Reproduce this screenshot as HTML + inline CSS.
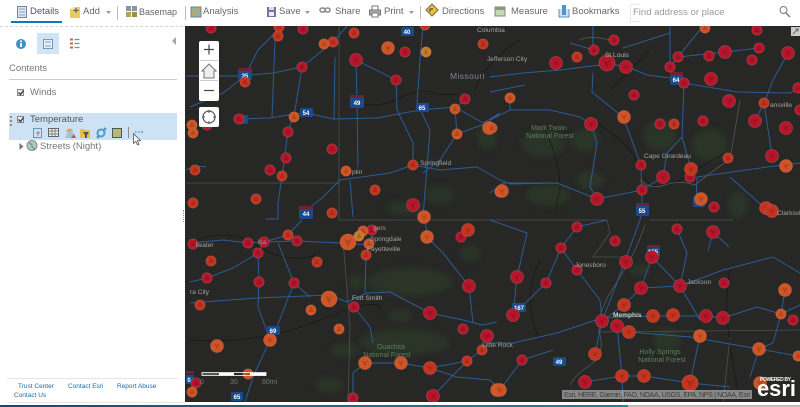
<!DOCTYPE html>
<html><head><meta charset="utf-8">
<style>
html,body{margin:0;padding:0;width:800px;height:407px;overflow:hidden;background:#fff;font-family:"Liberation Sans",sans-serif}
.t{position:absolute;font-size:9.500px;line-height:12px;color:#666;white-space:nowrap}
.l{position:absolute;font-size:6.500px;line-height:9px;color:#1d6aa5;white-space:nowrap}
#map{position:absolute;left:185px;top:26px;width:615px;height:376px;background:#272725;overflow:hidden}
svg{position:absolute;left:0;top:0}
.sep{position:absolute;width:1px;background:#bbb}
.btn{position:absolute;left:199px;width:20px;background:#fff}
</style></head><body>

<!-- toolbar -->
<div style="position:absolute;left:0;top:26px;width:800px;border-top:1px dashed #d4d4d4"></div>
<div style="position:absolute;left:11px;top:21px;width:51px;height:2px;background:#0a79bf"></div>
<svg width="640" height="26" style="left:0;top:0">
<rect x="17.500" y="6.500" width="9" height="11" fill="#dce6ee" stroke="#6c87a0"/><path d="M19 9h6M19 12h6M19 15h6" stroke="#87a6c0"/>
<path d="M70 9h3l1 -2h6v11H70z" fill="#e8cc60"/><path d="M76 8v5M73.500 10.500h5" stroke="#555"/>
<path d="M106 11h5l-2.500 3z" fill="#999"/>
<g fill="#8a97a3"><rect x="126" y="6" width="5" height="5"/><rect x="132" y="6" width="5" height="5"/></g><rect x="126" y="12" width="5" height="5" fill="#b5a258"/><rect x="132" y="12" width="5" height="5" fill="#a08a48"/>
<rect x="191" y="7" width="10" height="10" fill="#8fb29a" stroke="#77818a"/><path d="M192 15l7-7" stroke="#c9a34b" stroke-width="2"/>
<rect x="267" y="7" width="9" height="10" fill="#7a6fa8"/><rect x="269" y="7" width="5" height="3" fill="#ddd"/><rect x="269" y="12" width="5" height="4" fill="#eee"/>
<path d="M305 11h5l-2.500 3z" fill="#999"/>
<rect x="320" y="8" width="5" height="4" rx="2" fill="none" stroke="#888" stroke-width="1.500"/><rect x="325" y="8" width="5" height="4" rx="2" fill="none" stroke="#888" stroke-width="1.500"/>
<rect x="372" y="6" width="6" height="4" fill="#fff" stroke="#777"/><rect x="369.500" y="10" width="11" height="5" fill="#aaa" stroke="#777"/><rect x="372" y="13" width="6" height="4" fill="#fff" stroke="#777"/>
<path d="M409 11h5l-2.500 3z" fill="#999"/>
<path d="M432 4l6 6-6 6-6-6z" fill="#e6c24a" stroke="#7c6a2a"/><path d="M430 12v-3h3" stroke="#333" fill="none"/>
<rect x="495" y="7" width="10" height="9" fill="#c6d7b8" stroke="#7b8a70"/><rect x="495" y="7" width="10" height="3" fill="#889a78"/>
<path d="M559 9v8h10V9" fill="#cfe0ee" stroke="#5c93bd"/><rect x="562" y="5" width="4" height="10" fill="#4d94c9"/>
<rect x="630.500" y="4.500" width="166" height="17" fill="#fff" stroke="#ddd" stroke-dasharray="2 1"/>
</svg>
<svg width="20" height="26" style="left:778px;top:0"><circle cx="5.500" cy="10" r="3.500" fill="none" stroke="#777"/><path d="M8 13l4 4" stroke="#777" stroke-width="1.300"/></svg>
<div class="t" style="left:30px;top:6px;color:#58506a">Details</div>
<div class="t" style="left:83px;top:6px">Add</div>
<div class="sep" style="left:117px;top:6px;height:14px"></div>
<div class="t" style="left:139px;top:6px;font-size:9px">Basemap</div>
<div class="sep" style="left:185px;top:6px;height:14px"></div>
<div class="t" style="left:203px;top:6px">Analysis</div>
<div class="t" style="left:279px;top:6px">Save</div>
<div class="t" style="left:335px;top:6px">Share</div>
<div class="t" style="left:384px;top:6px">Print</div>
<div class="sep" style="left:420px;top:6px;height:13px"></div>
<div class="t" style="left:442px;top:6px">Directions</div>
<div class="t" style="left:511px;top:6px">Measure</div>
<div class="t" style="left:572px;top:6px">Bookmarks</div>
<div class="t" style="left:633px;top:7px;color:#999">Find address or place</div>

<!-- left panel -->
<div style="position:absolute;left:37px;top:33px;width:22px;height:21px;background:#cfe4f5"></div>
<div style="position:absolute;left:9px;top:113px;width:168px;height:27px;background:#cde3f5"></div>
<svg width="185" height="160" style="left:0;top:0;z-index:2;pointer-events:none">
<circle cx="21" cy="44" r="5" fill="#3e8fc9"/><rect x="20" y="43" width="2" height="4" fill="#fff"/><rect x="20" y="40.500" width="2" height="1.500" fill="#fff"/>
<rect x="43.500" y="39.500" width="9" height="9" fill="#e8f0f5" stroke="#7d98ae"/><path d="M45 42h6M45 46h6" stroke="#7ba4c4"/>
<path d="M70 39.500h3M70 43.500h3M70 47.500h3" stroke="#c06a50" stroke-width="2"/><path d="M74.500 39.500h5M74.500 43.500h5M74.500 47.500h5" stroke="#5a9bc8" stroke-width="1.200"/>
<path d="M176 37v8l-4-4z" fill="#a5a5a5"/>
<g fill="#eee" stroke="#888"><rect x="17.500" y="89.500" width="6" height="6"/><rect x="17.500" y="116.500" width="6" height="6"/></g>
<path d="M18.500 92.500l2 2 3-4M18.500 119.500l2 2 3-4" fill="none" stroke="#333" stroke-width="1.300"/>
<g fill="#8c8c8c"><rect x="10" y="116" width="2" height="2"/><rect x="10" y="120" width="2" height="2"/><rect x="10" y="124" width="2" height="2"/></g>
<rect x="33.500" y="128.500" width="8" height="9" fill="none" stroke="#5a9bc8"/><path d="M36 133h4M38 131v5" stroke="#c4774f"/>
<rect x="48.500" y="128.500" width="10" height="8" fill="#eee" stroke="#666"/><path d="M49 131h9M49 134h9M52 129v7M55 129v7" stroke="#666" stroke-width=".7"/>
<path d="M65 138l4-9h3l3 9z" fill="#9fc5d8"/><path d="M66 132a4 4 0 0 1 7-2z" fill="#e3a24e"/><path d="M71 138l3-4 2 4z" fill="#c8563c"/>
<path d="M80 129h4l1 1h5v8h-10z" fill="#e7bf4e"/><path d="M83 132h6l-2 3v3h-2v-3z" fill="#555"/>
<circle cx="101" cy="133" r="3.500" fill="none" stroke="#4fa0c4" stroke-width="2"/><circle cx="105" cy="129" r="1.500" fill="#4fa0c4"/><circle cx="98" cy="137" r="1.500" fill="#4fa0c4"/>
<rect x="112.500" y="128.500" width="9" height="9" fill="#a0bd8c" stroke="#555"/><path d="M114 136l6-6" stroke="#d9ae43" stroke-width="2"/>
<path d="M128.500 127v11" stroke="#8a8a8a"/>
<path d="M135 132h1.500M138 132h1.500M141 132h2" stroke="#5a9ed1" stroke-width="1.500"/>
<path d="M133.500 133.500v10l2.300-2 1.700 3.500 1.500-.7-1.600-3.500 3-.3z" fill="#f5f5f5" stroke="#555" stroke-width=".8"/>
<path d="M19.500 143v7l4-3.500z" fill="#777"/>
<circle cx="32" cy="145.500" r="5" fill="#a5cfc4" stroke="#888"/><path d="M29 143q3 1 3 3t3 3" stroke="#7aa074" fill="none" stroke-width="1.500"/>
</svg>
<div style="position:absolute;left:9px;top:79px;width:168px;height:1px;background:#ccc"></div>
<div class="t" style="left:9px;top:63px;color:#777">Contents</div>
<div class="t" style="left:30px;top:87px;color:#777">Winds</div>
<div class="t" style="left:30px;top:114px;color:#555">Temperature</div>
<div class="t" style="left:40px;top:141px;color:#777">Streets (Night)</div>
<div style="position:absolute;left:7px;top:378px;width:171px;height:1px;background:#e5e5e5"></div>
<div class="l" style="left:18px;top:382px">Trust Center</div>
<div class="l" style="left:68px;top:382px">Contact Esri</div>
<div class="l" style="left:117px;top:382px">Report Abuse</div>
<div class="l" style="left:14px;top:391px">Contact Us</div>
<div style="position:absolute;left:7px;top:402px;width:178px;height:1px;background:#e5e5e5"></div>
<div style="position:absolute;left:0;top:405px;width:628px;height:2px;background:linear-gradient(90deg,#17496a,#156f7d 50%,#1a8a8a)"></div>
<div style="position:absolute;left:628px;top:405px;width:172px;height:2px;background:#bdbdb5"></div>
<div style="position:absolute;left:183px;top:210px;width:1px;height:12px;border-left:1px dotted #999"></div>

<!-- map -->
<div id="map">
<svg width="615" height="376" viewBox="185 26 615 376">
<defs>
<filter id="b"><feGaussianBlur stdDeviation="3"/></filter>
<g id="c5"><circle r="5.200" stroke="#e08a78" stroke-opacity=".35" stroke-width=".7"/><path d="M-2.500 2L0-3.500 2.500 2z" fill="#000" opacity=".15"/></g>
<g id="c6"><circle r="6.500" stroke="#e08a78" stroke-opacity=".35" stroke-width=".7"/><path d="M-3-2.500L0 3.500 3-2.500 0-1z" fill="#000" opacity=".15"/></g>
<g id="c8"><circle r="8" stroke="#eb9a80" stroke-opacity=".35" stroke-width=".7"/><path d="M-4-3.500L0 5 4-3.500 0-1.500z" fill="#000" opacity=".15"/></g>
</defs>
<!-- forests -->
<g fill="#2f4229" filter="url(#b)" opacity=".5">
<ellipse cx="543" cy="143" rx="22" ry="14"/><ellipse cx="548" cy="195" rx="22" ry="11"/><ellipse cx="585" cy="140" rx="14" ry="12"/><ellipse cx="660" cy="135" rx="16" ry="16"/><ellipse cx="710" cy="145" rx="18" ry="16"/><ellipse cx="590" cy="180" rx="14" ry="9"/>
<ellipse cx="487" cy="137" rx="10" ry="12"/><ellipse cx="440" cy="195" rx="14" ry="9"/><ellipse cx="405" cy="208" rx="18" ry="7"/>
<ellipse cx="410" cy="282" rx="42" ry="14"/><ellipse cx="470" cy="253" rx="10" ry="8"/><ellipse cx="356" cy="282" rx="8" ry="8"/><ellipse cx="405" cy="342" rx="45" ry="13"/><ellipse cx="345" cy="350" rx="14" ry="7"/><ellipse cx="330" cy="385" rx="14" ry="8"/><ellipse cx="400" cy="316" rx="12" ry="6"/>
<ellipse cx="667" cy="340" rx="14" ry="12"/><ellipse cx="640" cy="270" rx="10" ry="6"/><ellipse cx="738" cy="205" rx="10" ry="14"/>
</g>
<!-- state lines -->
<g fill="none" stroke="#4f4f53" stroke-width=".8">
<path d="M339 26V220H490L607 220l3 13-17 24h30"/><path d="M186 183H339"/><path d="M343 240l7 87-2 75"/><path d="M650 220H733"/><path d="M597 332L800 330"/><path d="M730 337l-7 65"/>
</g>
<!-- rivers -->
<g fill="none" stroke="#101216" stroke-width=".8" opacity=".7">
<path d="M360 104q20 4 40-6t30-6 30 2"/><path d="M475 90q5-15 20-30t25-20"/><path d="M590 120q40 20 50 50t50 4 40-20"/><path d="M186 245q40-20 70 0t60 10"/><path d="M190 340q70 5 130-20t60-10"/><path d="M545 130q15 30 15 60l-5 20"/><path d="M610 90q20-20 40-40"/><path d="M540 340q-20-40 0-80"/><path d="M730 270q-10 40 10 130"/>
</g>
<g fill="none" stroke="#5c5c5e" stroke-width=".7">
<path d="M640 180q10 10 25 5t30 0q25-20 35-25 5-30 10-60"/><path d="M645 225q-10 30-30 60t-15 50-10 30-20 20"/><path d="M610 40q-20-5-30 0"/>
</g>
<!-- roads -->
<g fill="none" stroke="#2b5c96" stroke-width="1" stroke-linejoin="round">
<path d="M186 76H238L273 73 302 67 323 50 333 42 347 26"/>
<path d="M190 107L223 93 245 76 258 50 275 33"/>
<path d="M239 119L270 118 294 114 307 113 333 119 377 118 420 110 455 107 483 123 500 113"/>
<path d="M356 60L357 102 358 167"/>
<path d="M356 60L396 80 397 110 413 143V165"/>
<path d="M423 26L420 60 417 103 430 130 423 217"/>
<path d="M275 40L272 117"/>
<path d="M302 67L295 110 288 132 282 176 278 203"/>
<path d="M335 57L334 119"/>
<path d="M303 213L323 197 340 180 390 173 413 165 440 170 477 167 500 180 510 184 557 183 597 199 642 190 663 177 667 153 682 137 684 83"/>
<path d="M350 180L353 217"/>
<path d="M457 134L440 160 423 173"/>
<path d="M465 99L455 109 457 134"/>
<path d="M500 113L487 123 457 134"/>
<path d="M510 98V110L490 120"/>
<path d="M510 110L550 110 580 117 591 124 597 143 590 187 597 199"/>
<path d="M490 77L523 73 560 70 600 65"/>
<path d="M607 63L630 68 647 75 670 78 684 83 737 92 790 93 800 88"/>
<path d="M670 26V70M703 26L678 57 670 67"/>
<path d="M593 73L592 92 623 117 641 165 642 207"/>
<path d="M682 137L691 169"/>
<path d="M678 57L725 52 759 48"/>
<path d="M594 50L570 43M593 26V50M623 48L670 33"/>
<path d="M697 177L767 167 800 163M697 177L696 203M730 177L767 210"/>
<path d="M772 156L764 103M755 121L764 103 773 80 788 53"/>
<path d="M190 282L207 278 233 268 258 253 264 242 297 241 340 243 370 245"/>
<path d="M190 243L223 240 248 243 264 242"/>
<path d="M302 220L288 235 264 242"/>
<path d="M190 303L257 298 329 295 347 302 367 293 390 292 430 313 463 320 482 325 497 322"/>
<path d="M258 253L259 282 258 307 270 340 253 377 245 402"/>
<path d="M294 283L273 337M278 243L294 283 310 297"/>
<path d="M366 255L365 293"/>
<path d="M354 307L370 327 373 343"/>
<path d="M365 363L353 373V402"/>
<path d="M365 363L401 363 430 368 467 361 482 350 487 336"/>
<path d="M430 368L457 377 490 380 500 390"/>
<path d="M433 396L467 361"/>
<path d="M425 218L427 237 443 253 469 286 473 323"/>
<path d="M490 343H513L557 333 602 318 653 316 706 316 723 318 757 307 781 314 800 305"/>
<path d="M513 315L517 277 527 233 510 227 490 220"/>
<path d="M513 315L546 283 561 248 577 227 607 220"/>
<path d="M561 248L577 270 600 300 602 321"/>
<path d="M602 321L617 283 640 220 643 207"/>
<path d="M617 326L622 376 623 402"/>
<path d="M629 332L690 337 759 349 798 356"/>
<path d="M602 321L595 354"/>
<path d="M641 288L680 286 723 270 773 257 800 273"/>
<path d="M652 257L641 288 624 305 602 321"/>
<path d="M652 257L680 286 700 320"/>
<path d="M677 229L687 253 680 286"/>
<path d="M713 232L708 251M713 232L729 247"/>
<path d="M585 382L622 376 644 376 690 383 730 387"/>
<path d="M690 383L700 336"/>
<path d="M500 390L522 360 553 350"/>
<path d="M759 349L750 377"/>
<path d="M785 290L781 314 773 343 759 349"/>
<path d="M490 193L503 183 557 183"/>
<path d="M490 92L525 85"/>
<path d="M186 170q10-5 20-3"/><path d="M278 203v16h-12"/>
</g>
<!-- shields -->
<g font-family="Liberation Sans,sans-serif" font-size="6" font-weight="bold" fill="#fff" text-anchor="middle">
<g fill="#1a4a8c"><rect x="238" y="69" width="14" height="11" rx="2"/><rect x="350" y="96" width="14" height="12" rx="2"/><rect x="299" y="207" width="14" height="12" rx="2"/><rect x="670" y="73" width="13" height="12" rx="2"/><rect x="636" y="204" width="13" height="12" rx="2"/><rect x="647" y="246" width="13" height="11" rx="2"/><rect x="693" y="196" width="12" height="11" rx="2"/>
<rect x="401" y="27" width="13" height="9" rx="1"/><rect x="300" y="108" width="13" height="9" rx="1"/><rect x="416" y="103" width="13" height="9" rx="1"/><rect x="512" y="303" width="14" height="9" rx="1"/><rect x="553" y="357" width="13" height="9" rx="1"/><rect x="267" y="326" width="13" height="9" rx="1"/><rect x="231" y="392" width="12" height="9" rx="1"/><rect x="240" y="115" width="8" height="9" rx="1"/><rect x="186" y="375" width="8" height="9" rx="1"/></g>
<g fill="#6b2330"><rect x="238" y="68" width="14" height="3"/><rect x="350" y="95" width="14" height="3"/><rect x="299" y="206" width="14" height="3"/><rect x="670" y="72" width="13" height="3"/><rect x="636" y="203" width="13" height="3"/><rect x="647" y="245" width="13" height="3"/><rect x="186" y="371" width="8" height="3"/></g>
<text x="245" y="78">35</text><text x="357" y="105">49</text><text x="306" y="216">44</text><text x="676" y="82">64</text><text x="642" y="213">55</text><text x="653" y="254">155</text><text x="699" y="204">57</text><text x="407" y="34">40</text><text x="306" y="115">54</text><text x="422" y="110">65</text><text x="519" y="310">167</text><text x="559" y="364">49</text><text x="273" y="333">69</text><text x="237" y="399">65</text><text x="189" y="382">0</text>
</g>
<!-- dots -->
<g fill="#b5162c">
<use href="#c5" x="211" y="28"/><use href="#c5" x="303" y="29"/><use href="#c5" x="405" y="52"/><use href="#c5" x="302" y="67"/><use href="#c6" x="356" y="60"/><use href="#c5" x="396" y="80"/><use href="#c5" x="465" y="99"/><use href="#c5" x="239" y="119"/><use href="#c5" x="207" y="125"/><use href="#c5" x="288" y="132"/><use href="#c5" x="332" y="149"/><use href="#c5" x="286" y="158"/><use href="#c5" x="270" y="170"/><use href="#c6" x="413" y="205"/>
<use href="#c5" x="614" y="40"/><use href="#c5" x="594" y="50"/><use href="#c6" x="556" y="63"/><use href="#c8" x="607" y="63"/><use href="#c6" x="626" y="67"/><use href="#c5" x="678" y="57"/><use href="#c5" x="670" y="67"/><use href="#c5" x="684" y="83"/><use href="#c5" x="709" y="56"/><use href="#c6" x="725" y="52"/><use href="#c6" x="711" y="79"/><use href="#c5" x="757" y="30"/><use href="#c5" x="759" y="48"/><use href="#c5" x="752" y="60"/><use href="#c6" x="788" y="53"/><use href="#c5" x="798" y="88"/><use href="#c6" x="729" y="101"/><use href="#c6" x="755" y="121"/><use href="#c6" x="786" y="128"/><use href="#c5" x="800" y="110"/><use href="#c5" x="634" y="95"/><use href="#c6" x="591" y="124"/><use href="#c5" x="660" y="124"/><use href="#c5" x="703" y="121"/><use href="#c6" x="772" y="156"/><use href="#c5" x="641" y="165"/><use href="#c5" x="690" y="177"/><use href="#c6" x="663" y="177"/><use href="#c5" x="642" y="190"/><use href="#c6" x="597" y="199"/><use href="#c5" x="714" y="207"/>
<use href="#c5" x="193" y="244"/><use href="#c5" x="248" y="243"/><use href="#c5" x="264" y="242"/><use href="#c5" x="297" y="241"/><use href="#c5" x="258" y="253"/><use href="#c5" x="207" y="278"/><use href="#c5" x="259" y="282"/><use href="#c5" x="294" y="283"/><use href="#c5" x="372" y="230"/><use href="#c5" x="461" y="237"/><use href="#c6" x="469" y="286"/><use href="#c5" x="354" y="307"/><use href="#c6" x="430" y="313"/><use href="#c5" x="463" y="329"/><use href="#c6" x="487" y="336"/><use href="#c5" x="196" y="383"/><use href="#c6" x="433" y="396"/><use href="#c5" x="353" y="398"/>
<use href="#c5" x="577" y="227"/><use href="#c5" x="615" y="241"/><use href="#c5" x="561" y="248"/><use href="#c5" x="677" y="229"/><use href="#c6" x="713" y="232"/><use href="#c6" x="652" y="257"/><use href="#c6" x="626" y="262"/><use href="#c5" x="577" y="270"/><use href="#c6" x="517" y="277"/><use href="#c5" x="546" y="283"/><use href="#c6" x="641" y="288"/><use href="#c6" x="680" y="286"/><use href="#c5" x="724" y="283"/><use href="#c6" x="513" y="315"/><use href="#c6" x="602" y="321"/><use href="#c6" x="617" y="326"/><use href="#c5" x="793" y="320"/><use href="#c5" x="522" y="360"/><use href="#c6" x="585" y="382"/><use href="#c6" x="706" y="316"/><use href="#c6" x="723" y="318"/>
</g>
<g fill="#c43420">
<use href="#c5" x="278" y="36"/><use href="#c5" x="279" y="27"/><use href="#c5" x="425" y="25"/><use href="#c5" x="333" y="42"/><use href="#c5" x="354" y="33"/><use href="#c5" x="483" y="44"/><use href="#c5" x="245" y="82"/><use href="#c5" x="282" y="176"/><use href="#c5" x="195" y="170"/><use href="#c5" x="413" y="165"/><use href="#c5" x="375" y="190"/><use href="#c5" x="256" y="199"/><use href="#c5" x="193" y="203"/><use href="#c5" x="332" y="213"/>
<use href="#c5" x="577" y="57"/><use href="#c5" x="764" y="103"/><use href="#c5" x="674" y="124"/><use href="#c5" x="728" y="158"/><use href="#c6" x="691" y="169"/>
<use href="#c5" x="288" y="235"/><use href="#c5" x="211" y="261"/><use href="#c5" x="317" y="262"/><use href="#c5" x="200" y="305"/><use href="#c5" x="366" y="255"/><use href="#c5" x="482" y="350"/><use href="#c5" x="467" y="361"/><use href="#c6" x="430" y="368"/>
<use href="#c6" x="624" y="305"/><use href="#c6" x="653" y="316"/><use href="#c6" x="673" y="315"/><use href="#c6" x="629" y="332"/><use href="#c6" x="595" y="354"/><use href="#c6" x="622" y="376"/><use href="#c6" x="644" y="376"/><use href="#c8" x="690" y="383"/><use href="#c6" x="766" y="208"/><use href="#c6" x="772" y="211"/><use href="#c6" x="468" y="230"/>
</g>
<g fill="#cf5426">
<use href="#c5" x="324" y="44"/><use href="#c6" x="388" y="48"/><use href="#c5" x="455" y="109"/><use href="#c5" x="294" y="117"/><use href="#c5" x="192" y="125"/><use href="#c5" x="193" y="133"/><use href="#c5" x="457" y="134"/><use href="#c6" x="489" y="128"/><use href="#c5" x="346" y="171"/><use href="#c6" x="424" y="217"/><use href="#c5" x="500" y="192"/><use href="#c5" x="510" y="98"/><use href="#c6" x="624" y="117"/><use href="#c5" x="492" y="128"/><use href="#c6" x="786" y="166"/><use href="#c6" x="502" y="191"/><use href="#c6" x="701" y="199"/><use href="#c5" x="705" y="28"/>
<use href="#c8" x="329" y="299"/><use href="#c8" x="348" y="242"/><use href="#c5" x="363" y="231"/><use href="#c5" x="369" y="244"/><use href="#c6" x="427" y="237"/><use href="#c5" x="311" y="310"/><use href="#c5" x="339" y="329"/><use href="#c6" x="217" y="346"/><use href="#c6" x="270" y="340"/><use href="#c6" x="365" y="363"/><use href="#c6" x="401" y="363"/><use href="#c5" x="248" y="374"/><use href="#c5" x="192" y="392"/><use href="#c6" x="497" y="390"/>
<use href="#c6" x="785" y="290"/><use href="#c5" x="781" y="314"/><use href="#c6" x="700" y="336"/><use href="#c6" x="759" y="349"/><use href="#c5" x="798" y="356"/><use href="#c6" x="760" y="383"/><use href="#c6" x="500" y="390"/>
</g>
<g fill="#c67a2a"><use href="#c5" x="426" y="52"/><use href="#c5" x="359" y="236"/></g>
<!-- labels -->
<g font-family="Liberation Sans,sans-serif" font-size="6.600" fill="#a3a3a0">
<text x="477" y="32">Columbia</text><text x="487" y="61">Jefferson City</text><text x="605" y="57" fill="#b5b5b2">St Louis</text><text x="420" y="165">Springfield</text><text x="352" y="174">plin</text><text x="644" y="158">Cape Girardeau</text><text x="770" y="107">ansville</text><text x="777" y="215">Clarksville</text><text x="373" y="230">gers</text><text x="370" y="241">Springdale</text><text x="367" y="251">Fayetteville</text><text x="352" y="300" fill="#b5b5b2">Fort Smith</text><text x="258" y="244">lsa</text><text x="196" y="247">lwater</text><text x="190" y="294">ra City</text><text x="575" y="267">Jonesboro</text><text x="687" y="284">Jackson</text><text x="613" y="317" fill="#d0d0cc" font-weight="bold">Memphis</text><text x="482" y="347">Little Rock</text>
<text x="450" y="79" font-size="8.500" fill="#8e7f9c" letter-spacing=".4">Missouri</text>
</g>
<g font-family="Liberation Sans,sans-serif" font-size="7" fill="#58805a" text-anchor="middle">
<text x="549" y="130">Mark Twain</text><text x="550" y="138">National Forest</text>
<text x="391" y="349">Ouachita</text><text x="387" y="357">National Forest</text>
<text x="660" y="354">Holly Springs</text><text x="662" y="362">National Forest</text>
</g>
<!-- scale bar -->
<g><rect x="202" y="373" width="17" height="2" fill="#555"/><rect x="202" y="372.500" width="64" height="3" fill="none" stroke="#fff" stroke-width=".8"/><rect x="219" y="373" width="15" height="2.500" fill="#fff"/><rect x="250" y="373" width="16" height="2.500" fill="#fff"/>
<g font-family="Liberation Sans,sans-serif" font-size="7" fill="#777775"><text x="200" y="384">0</text><text x="230" y="384">30</text><text x="262" y="384">60mi</text></g></g>
<!-- fullscreen -->
<g transform="translate(791 27)"><rect width="9" height="9" fill="#ccc"/><path d="M2 7l5-5M4.500 2H7v2.500" stroke="#666" fill="none"/></g>
<!-- attribution -->
<rect x="562" y="390" width="190" height="9" fill="#bdbdbd" fill-opacity=".65"/>
<text x="564" y="397" font-family="Liberation Sans,sans-serif" font-size="7" fill="#3c3c3c" textLength="186">Esri, HERE, Garmin, FAO, NOAA, USGS, EPA, NPS | NOAA, Esri</text>
<!-- esri logo -->
<text x="760" y="381" font-family="Liberation Sans,sans-serif" font-size="5" font-weight="bold" fill="#fff" textLength="31">POWERED BY</text>
<text x="757" y="396" font-family="Liberation Sans,sans-serif" font-size="22" font-weight="bold" fill="#fff" textLength="39" lengthAdjust="spacingAndGlyphs">esri</text>
</svg>
</div>

<!-- map widgets -->
<div class="btn" style="top:41px;height:60px;border-radius:2px;z-index:3"></div>
<div class="btn" style="top:107px;height:20px;border-radius:2px;z-index:3"></div>
<svg width="30" height="100" style="left:194px;top:35px;z-index:4">
<path d="M15 9.500v10M10 14.500h10" stroke="#444" stroke-width="1.200"/>
<path d="M6 25.500h18M6 45.500h18" stroke="#ccc"/>
<path d="M8 36l7-7 7 7h-2v7h-10v-7z" fill="#eee" stroke="#777"/>
<path d="M10 55.500h10" stroke="#444" stroke-width="1.200"/>
<circle cx="15" cy="82" r="6" fill="none" stroke="#555" stroke-width="1.200"/><path d="M15 75v3M15 86v3M8 82h3M19 82h3" stroke="#555"/>
</svg>
</body></html>
